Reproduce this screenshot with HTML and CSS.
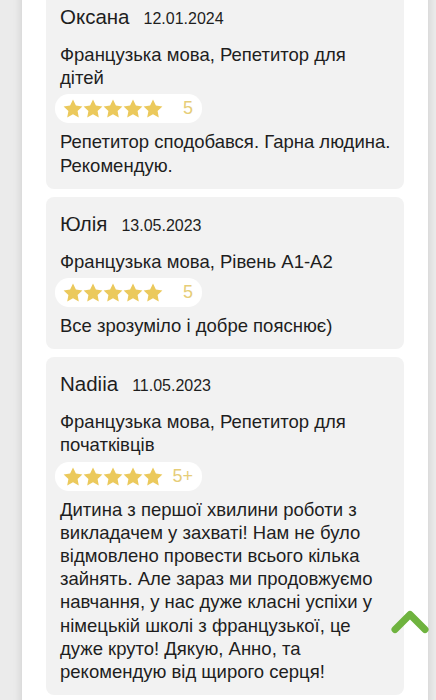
FILE: index.html
```html
<!DOCTYPE html>
<html lang="uk">
<head>
<meta charset="utf-8">
<title>Відгуки</title>
<link rel="stylesheet" href="styles.css">
</head>
<body>
<div class="panel">
  <div class="reviews">
    <div class="card">
      <div class="head"><span class="name">Оксана</span><span class="date">12.01.2024</span></div>
      <div class="spec">Французька мова, Репетитор для дітей</div>
      <div class="rating">
        <span class="stars">
          <svg viewBox="0 0 100 19" width="100" height="19"><defs><path id="s" d="M10 0.6l2.9 6 6.5 0.8-4.8 4.5 1.2 6.5L10 15.2 4.2 18.4l1.2-6.5L0.6 7.4l6.5-0.8z"/></defs><use href="#s" x="0"/><use href="#s" x="20"/><use href="#s" x="40"/><use href="#s" x="60"/><use href="#s" x="80"/></svg>
        </span>
        <span class="score">5</span>
      </div>
      <div class="text">Репетитор сподобався. Гарна людина. Рекомендую.</div>
    </div>
    <div class="card">
      <div class="head"><span class="name">Юлія</span><span class="date">13.05.2023</span></div>
      <div class="spec">Французька мова, Рівень А1-А2</div>
      <div class="rating">
        <span class="stars">
          <svg viewBox="0 0 100 19" width="100" height="19"><use href="#s" x="0"/><use href="#s" x="20"/><use href="#s" x="40"/><use href="#s" x="60"/><use href="#s" x="80"/></svg>
        </span>
        <span class="score">5</span>
      </div>
      <div class="text">Все зрозуміло і добре пояснює)</div>
    </div>
    <div class="card">
      <div class="head"><span class="name">Nadiia</span><span class="date">11.05.2023</span></div>
      <div class="spec">Французька мова, Репетитор для початківців</div>
      <div class="rating">
        <span class="stars">
          <svg viewBox="0 0 100 19" width="100" height="19"><use href="#s" x="0"/><use href="#s" x="20"/><use href="#s" x="40"/><use href="#s" x="60"/><use href="#s" x="80"/></svg>
        </span>
        <span class="score">5+</span>
      </div>
      <div class="text">Дитина з першої хвилини роботи з викладачем у захваті! Нам не було відмовлено провести всього кілька зайнять. Але зараз ми продовжуємо навчання, у нас дуже класні успіхи у німецькій школі з французької, це дуже круто! Дякую, Анно, та рекомендую від щирого серця!</div>
    </div>
  </div>
</div>
<a class="to-top" href="#" aria-label="Вгору">
  <svg viewBox="0 0 38 26" width="38" height="26"><path d="M4 21.5L19 6.5L34 21.5" fill="none" stroke="#6fb33f" stroke-width="7" stroke-linecap="round" stroke-linejoin="round"/></svg>
</a>
</body>
</html>
```
FILE: styles.css
```css
html, body {
  margin: 0;
  padding: 0;
}
body {
  background: #ebebeb;
  font-family: "Liberation Sans", Arial, sans-serif;
  color: #1e1e1e;
  overflow: hidden;
}
.panel {
  margin: 0 8px 0 22px;
  background: #fff;
  box-shadow: 0 0 9px rgba(0, 0, 0, 0.14);
  padding: 0 24px 20px;
  min-height: 720px;
}
.reviews {
  display: flex;
  flex-direction: column;
  gap: 8px;
  margin-top: -10px;
}
.card {
  background: #f2f2f2;
  border-radius: 8px;
  padding: 13px 12px 12px 14px;
}
.head {
  display: flex;
  align-items: baseline;
  gap: 14px;
  height: 28px;
  line-height: 28px;
  margin-bottom: 12px;
}
.name {
  font-size: 20.5px;
}
.date {
  font-size: 16px;
}
.spec, .text {
  font-size: 18.5px;
  line-height: 23.2px;
}
.spec {
  margin-bottom: 5px;
}
.rating {
  box-sizing: border-box;
  width: 147px;
  height: 29px;
  margin-left: -5px;
  margin-bottom: 7px;
  padding: 0 9px 0 8px;
  background: #fff;
  border-radius: 14px;
  display: flex;
  align-items: center;
  justify-content: space-between;
}
.stars {
  display: flex;
}
.stars svg {
  fill: #ebc95c;
}
.score {
  font-size: 18px;
  color: #e6cd78;
}
.to-top {
  position: fixed;
  left: 391px;
  top: 608px;
  display: block;
  line-height: 0;
}
```
